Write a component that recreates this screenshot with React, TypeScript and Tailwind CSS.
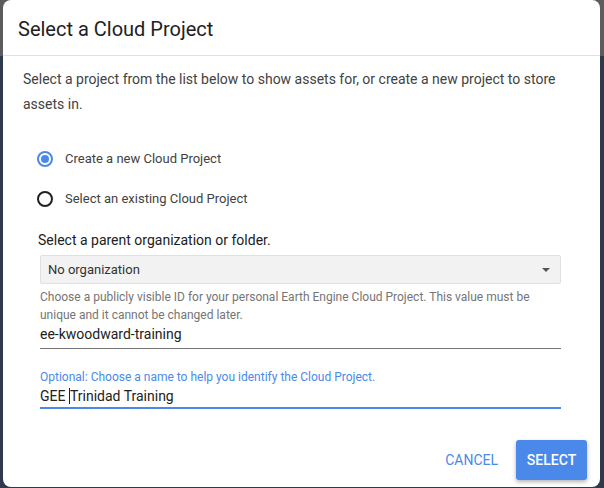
import React from "react";

function Radio({ checked, label }: { checked?: boolean; label: string }) {
  return (
    <label className="flex items-center h-[20px] leading-[20px] cursor-pointer">
      <span
        className={
          "flex items-center justify-center w-[16px] h-[16px] rounded-full border-2 " +
          (checked ? "border-[#4a89ea]" : "border-[#212121]")
        }
      >
        {checked && <span className="w-[8px] h-[8px] rounded-full bg-[#4a89ea]" />}
      </span>
      <span className="ml-[12px] text-[13px] text-[#424242]">{label}</span>
    </label>
  );
}

export default function App() {
  return (
    <div
      className="w-[604px] h-[488px] overflow-hidden bg-[linear-gradient(to_bottom,#5c5c5c_0,#5c5c5c_56px,#2e3a4c_56px)] pl-[3px] pr-[4px] font-['Roboto',sans-serif]"
    >
      <div className="bg-white h-[487px] rounded-[8px] flex flex-col">
        <div className="h-[56px] flex items-center px-[15px] border-b border-[#e0e0e0]">
          <h1 className="text-[20px] text-[#212121] pt-[2px]">Select a Cloud Project</h1>
        </div>

        <div className="px-[20px] pt-[11px]">
          <p className="text-[14px] leading-[25px] text-[#424242]">
            Select a project from the list below to show assets for, or create a new project to store
            assets in.
          </p>

          <div className="pl-[14px] pt-[32px] flex flex-col gap-[20px]">
            <Radio checked label="Create a new Cloud Project" />
            <Radio label="Select an existing Cloud Project" />
          </div>

          <div className="pl-[15px] pt-[22px]">
            <div className="text-[14px] text-[#212121] leading-[18px]">
              Select a parent organization or folder.
            </div>

            <div className="pl-[2px] pr-[19px]">
              <div className="mt-[6px] h-[29px] bg-[#f2f2f2] border border-[#e0e0e0] rounded-[2px] flex items-center justify-between pl-[7px] pr-[10px]">
                <span className="text-[13px] text-[#333333]">No organization</span>
                <svg width="8" height="4" viewBox="0 0 8 4">
                  <path d="M0 0 L8 0 L4 4 Z" fill="#555555" />
                </svg>
              </div>

              <div className="mt-[4px] text-[12px] leading-[18px] text-[#757575]">
                Choose a publicly visible ID for your personal Earth Engine Cloud Project. This value must be
                unique and it cannot be changed later.
              </div>

              <div className="h-[25px] pb-[3px] border-b border-[#757575] flex items-center">
                <span className="text-[14px] text-[#212121]">ee-kwoodward-training</span>
              </div>

              <div className="mt-[20px] text-[12px] leading-[16px] text-[#4a89ea]">
                Optional: Choose a name to help you identify the Cloud Project.
              </div>
              <div className="h-[24px] border-b-2 border-[#4a89ea] flex items-center">
                <span className="text-[14px] text-[#212121] whitespace-pre">
                  {"GEE "}
                  <span className="inline-block w-[1px] h-[16px] bg-[#212121] align-[-3px]" />
                  Trinidad Training
                </span>
              </div>
            </div>
          </div>
        </div>

        <div className="mt-[31px] flex justify-end items-center pr-[13px] gap-[16px]">
          <button className="text-[14px] text-[#4a89ea] px-[2px] h-[40px]">CANCEL</button>
          <button className="text-[14px] font-medium text-white bg-[#4a89ea] w-[71px] h-[40px] rounded-[3px] shadow-[0_2px_4px_rgba(0,0,0,0.3)]">
            SELECT
          </button>
        </div>
      </div>
    </div>
  );
}
